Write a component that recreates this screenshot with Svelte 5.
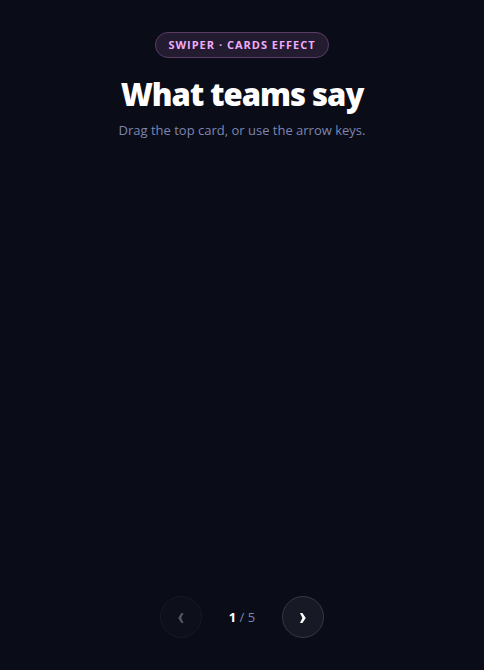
<script>
  const total = 5;
  let current = $state(1);

  function go(step) {
    current = Math.min(total, Math.max(1, current + step));
  }

  function onkeydown(event) {
    if (event.key === 'ArrowLeft') go(-1);
    if (event.key === 'ArrowRight') go(1);
  }
</script>

<svelte:window {onkeydown} />

<main>
  <header>
    <span class="badge">SWIPER · CARDS EFFECT</span>
    <h1>What teams say</h1>
    <p>Drag the top card, or use the arrow keys.</p>
  </header>

  <section class="stage" aria-label="Testimonials"></section>

  <nav aria-label="Card navigation">
    <button type="button" aria-label="Previous card" disabled={current === 1} onclick={() => go(-1)}>
      <svg viewBox="0 0 8 12" width="8" height="12" aria-hidden="true">
        <path d="M4.4 2h2.2L4.2 7l2.4 5H4.4L1.2 7z" />
      </svg>
    </button>
    <div class="count"><strong>{current}</strong> / {total}</div>
    <button type="button" aria-label="Next card" disabled={current === total} onclick={() => go(1)}>
      <svg viewBox="0 0 8 12" width="8" height="12" aria-hidden="true">
        <path d="M3.4 2H1l2.4 5L1 12h2.4L6.8 7z" />
      </svg>
    </button>
  </nav>
</main>

<style>
  :global(body) {
    margin: 0;
    background: #0a0c17;
  }

  main {
    box-sizing: border-box;
    min-height: 100vh;
    padding: 32px 20px;
    display: flex;
    flex-direction: column;
    align-items: center;
    color: #fff;
    font-family: "Segoe UI", "Open Sans", "Noto Sans", sans-serif;
  }

  header {
    display: flex;
    flex-direction: column;
    align-items: center;
    text-align: center;
  }

  .badge {
    padding: 4px 12px;
    border: 1px solid #5b3d66;
    border-radius: 999px;
    background: #231b30;
    color: #f0abfc;
    font-size: 11px;
    font-weight: 700;
    line-height: 16px;
    letter-spacing: 1px;
  }

  h1 {
    margin: 16px 0 4px;
    font-size: 31px;
    font-weight: 800;
    line-height: 40px;
    letter-spacing: -1px;
  }

  p {
    margin: 0;
    color: #7c86b0;
    font-size: 13px;
    line-height: 24px;
  }

  .stage {
    flex: 1;
    width: 100%;
  }

  nav {
    display: flex;
    align-items: center;
    gap: 18px;
  }

  button {
    width: 42px;
    height: 42px;
    padding: 0;
    display: grid;
    place-items: center;
    border: 1px solid #353742;
    border-radius: 50%;
    background: #171924;
    color: #fff;
    cursor: pointer;
  }

  button:disabled {
    opacity: 0.3;
    cursor: default;
  }

  svg {
    fill: currentColor;
  }

  .count {
    min-width: 44px;
    color: #7c86b0;
    font-size: 13px;
    line-height: 20px;
    text-align: center;
  }

  strong {
    color: #fff;
    font-weight: 700;
  }
</style>
